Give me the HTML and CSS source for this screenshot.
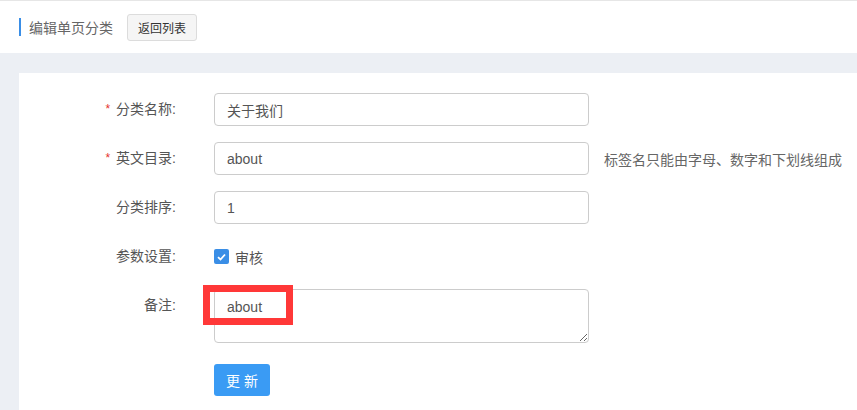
FILE: index.html
```html
<!DOCTYPE html>
<html lang="zh-CN">
  <head>
    <meta charset="UTF-8" />
    <meta name="viewport" content="width=device-width, initial-scale=1.0" />
    <title>编辑单页分类</title>
    <link rel="stylesheet" href="styles.css">
  </head>

  <body>
    <div class="page-head">
      <span class="head-bar"></span>
      <span class="head-title">编辑单页分类</span>
      <button class="btn-back">返回列表</button>
    </div>

    <div class="main">
      <form class="panel">
        <div class="form-row">
          <label class="form-label"><span class="req">*</span>分类名称:</label>
          <input class="form-input" type="text" value="关于我们" />
        </div>

        <div class="form-row">
          <label class="form-label"><span class="req">*</span>英文目录:</label>
          <input class="form-input" type="text" value="about" />
          <span class="form-help">标签名只能由字母、数字和下划线组成</span>
        </div>

        <div class="form-row">
          <label class="form-label">分类排序:</label>
          <input class="form-input" type="text" value="1" />
        </div>

        <div class="form-row">
          <label class="form-label">参数设置:</label>
          <span class="check">
            <svg width="9" height="8" viewBox="0 0 9 8">
              <path d="M1 4.2 L3.5 6.5 L8 1.5" fill="none" stroke="#fff" stroke-width="1.8" />
            </svg>
          </span>
          <span class="check-text">审核</span>
        </div>

        <div class="form-row form-row-top">
          <label class="form-label">备注:</label>
          <div class="area-wrap">
            <textarea class="form-area">about</textarea>
            <div class="mark"></div>
          </div>
        </div>

        <div class="form-row form-row-btn">
          <button class="btn-submit" type="button">更新</button>
        </div>
      </form>
    </div>
  </body>
</html>
```

FILE: styles.css
```css
body {
  margin: 0;
  font-family: "Liberation Sans", "Noto Sans CJK SC", sans-serif;
  font-size: 14px;
  color: #555;
  background-color: #eceff4;
}

.page-head {
  display: flex;
  align-items: center;
  height: 52px;
  padding-left: 19px;
  background-color: #fff;
  border-top: 1px solid #e6e6e6;
}

.head-bar {
  width: 2px;
  height: 18px;
  background-color: #3a8ee6;
}

.head-title {
  margin-left: 8px;
  color: #666;
  font-size: 14px;
}

.btn-back {
  margin-left: 14px;
  width: 70px;
  height: 27px;
  padding: 0;
  font: 12px "Liberation Sans", "Noto Sans CJK SC", sans-serif;
  color: #333;
  background-color: #f5f5f5;
  border: 1px solid #dcdcdc;
  border-radius: 3px;
}

.main {
  padding: 20px 0 0 19px;
}

.panel {
  background-color: #fff;
  padding: 20px 0 14px 0;
  margin: 0;
}

.form-row {
  display: flex;
  align-items: center;
  height: 33px;
  margin-bottom: 16px;
}

.form-row-top {
  align-items: flex-start;
  height: 54px;
  margin-bottom: 21px;
}

.form-label {
  width: 157px;
  height: 33px;
  margin-right: 38px;
  text-align: right;
  line-height: 33px;
  color: #555;
  overflow: hidden;
}

.req {
  color: #e5322d;
  margin-right: 6px;
  font-size: 12px;
  vertical-align: top;
}

.form-input {
  box-sizing: border-box;
  width: 375px;
  height: 33px;
  padding: 0 12px;
  font: 14px "Liberation Sans", "Noto Sans CJK SC", sans-serif;
  color: #555;
  border: 1px solid #ccc;
  border-radius: 4px;
  outline: none;
}

.form-help {
  margin-left: 15px;
  color: #666;
}

.check {
  display: flex;
  align-items: center;
  justify-content: center;
  width: 15px;
  height: 15px;
  background-color: #3a8ee6;
  border-radius: 2px;
}

.check-text {
  margin-left: 6px;
}

.area-wrap {
  position: relative;
}

.form-area {
  display: block;
  box-sizing: border-box;
  width: 375px;
  height: 54px;
  margin: 0;
  padding: 9px 12px 7px;
  font: 14px "Liberation Sans", "Noto Sans CJK SC", sans-serif;
  color: #555;
  border: 1px solid #ccc;
  border-radius: 4px;
  outline: none;
}

.mark {
  position: absolute;
  left: -11px;
  top: -4px;
  width: 76px;
  height: 26px;
  border: 7px solid #ff3838;
}

.form-row-btn {
  height: 32px;
  padding-left: 195px;
  margin-bottom: 0;
}

.btn-submit {
  width: 56px;
  height: 32px;
  padding: 0;
  font: 14px "Liberation Sans", "Noto Sans CJK SC", sans-serif;
  letter-spacing: 4px;
  text-indent: 4px;
  color: #fff;
  background-color: #3a9bf4;
  border: none;
  border-radius: 3px;
}
```
